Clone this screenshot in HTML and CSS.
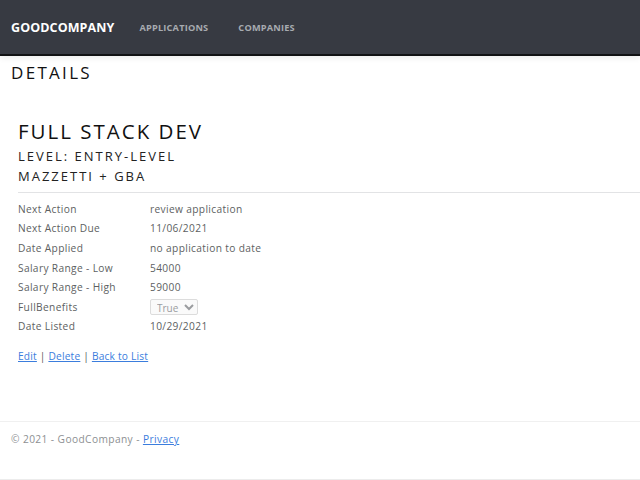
FILE: index.html
```html
<!DOCTYPE html>
<html>
<head>
<meta charset="utf-8">
<link rel="stylesheet" href="styles.css">
</head>
<body>
<header class="navbar">
  <a class="brand" href="#">GOODCOMPANY</a>
  <nav class="nav">
    <a class="nav-link" href="#">APPLICATIONS</a>
    <a class="nav-link" href="#">COMPANIES</a>
  </nav>
</header>
<main class="main">
  <h1 class="page-title">DETAILS</h1>
  <section class="details">
    <h2 class="job-title">FULL STACK DEV</h2>
    <h4 class="sub">LEVEL: ENTRY-LEVEL</h4>
    <h4 class="sub">MAZZETTI + GBA</h4>
    <hr class="rule">
    <dl class="grid">
      <dt>Next Action</dt><dd>review application</dd>
      <dt>Next Action Due</dt><dd>11/06/2021</dd>
      <dt>Date Applied</dt><dd>no application to date</dd>
      <dt>Salary Range - Low</dt><dd>54000</dd>
      <dt>Salary Range - High</dt><dd>59000</dd>
      <dt>FullBenefits</dt><dd><select class="sel" disabled><option>True</option></select></dd>
      <dt>Date Listed</dt><dd>10/29/2021</dd>
    </dl>
    <div class="actions">
      <a href="#">Edit</a> | <a href="#">Delete</a> | <a href="#">Back to List</a>
    </div>
  </section>
</main>
<footer class="footer">
  &copy; 2021 - GoodCompany - <a href="#">Privacy</a>
</footer>
</body>
</html>
```
FILE: styles.css
```css
* { box-sizing: border-box; }
html, body { margin: 0; padding: 0; }
body {
  font-family: "Open Sans", "Noto Sans", sans-serif;
  background: #fff;
  color: #212529;
  width: 640px;
  height: 480px;
  overflow: hidden;
  display: flex;
  flex-direction: column;
}
body > * { flex: none; }
.navbar {
  height: 56px;
  background: #373a42;
  border-bottom: 2px solid #111214;
  box-shadow: 0 2px 6px rgba(0,0,0,0.08);
  display: flex;
  align-items: center;
  padding: 0 11px;
}
.brand {
  color: #fff;
  font-weight: 700;
  font-size: 12.5px;
  text-decoration: none;
  margin-right: 25px;
  letter-spacing: 0.1px;
}
.nav { display: flex; gap: 30px; }
.nav-link {
  color: #a7abb0;
  font-weight: 700;
  font-size: 9.2px;
  text-decoration: none;
  letter-spacing: 0.2px;
}
.main { padding: 0 0 0 11px; }
.page-title {
  font-weight: 400;
  font-size: 17px;
  letter-spacing: 2.3px;
  margin: 5px 0 0;
  line-height: 24px;
  color: #111;
}
.details { padding: 0 0 0 7px; margin-top: 32px; }
.job-title {
  font-weight: 400;
  font-size: 20.5px;
  letter-spacing: 2px;
  margin: 0;
  line-height: 28px;
  color: #111;
}
.sub {
  font-weight: 400;
  font-size: 13px;
  letter-spacing: 2px;
  margin: 0;
  line-height: 20px;
  color: #222;
}
.sub:first-of-type { margin-top: 1px; }
.rule {
  border: 0;
  border-top: 1px solid #e2e3e5;
  margin: 6px 0 6px;
}
.grid {
  display: grid;
  grid-template-columns: 132px 1fr;
  grid-auto-rows: 19.6px;
  align-items: center;
  margin: 0;
  font-size: 10.2px;
  color: #5d5f62;
  letter-spacing: 0.35px;
}
.grid dt, .grid dd { margin: 0; }
.sel {
  font-family: inherit;
  font-size: 10px;
  color: #9a9c9f;
  width: 48px;
  height: 16px;
  padding: 0 2px;
  border: 1px solid #dcdcdc;
  border-radius: 2px;
  background: #fafafa;
  opacity: 1;
}
.actions {
  margin-top: 13px;
  font-size: 10.2px;
  color: #555;
  letter-spacing: 0.2px;
}
.actions a, .footer a { color: #3b7ddd; }
.footer {
  margin-top: 58px;
  border-top: 1px solid #f0f0f0;
  border-bottom: 1px solid #ececec;
  height: 59px;
  padding: 10px 11px 0;
  font-size: 10.2px;
  color: #8d8f92;
  letter-spacing: 0.4px;
}
```
